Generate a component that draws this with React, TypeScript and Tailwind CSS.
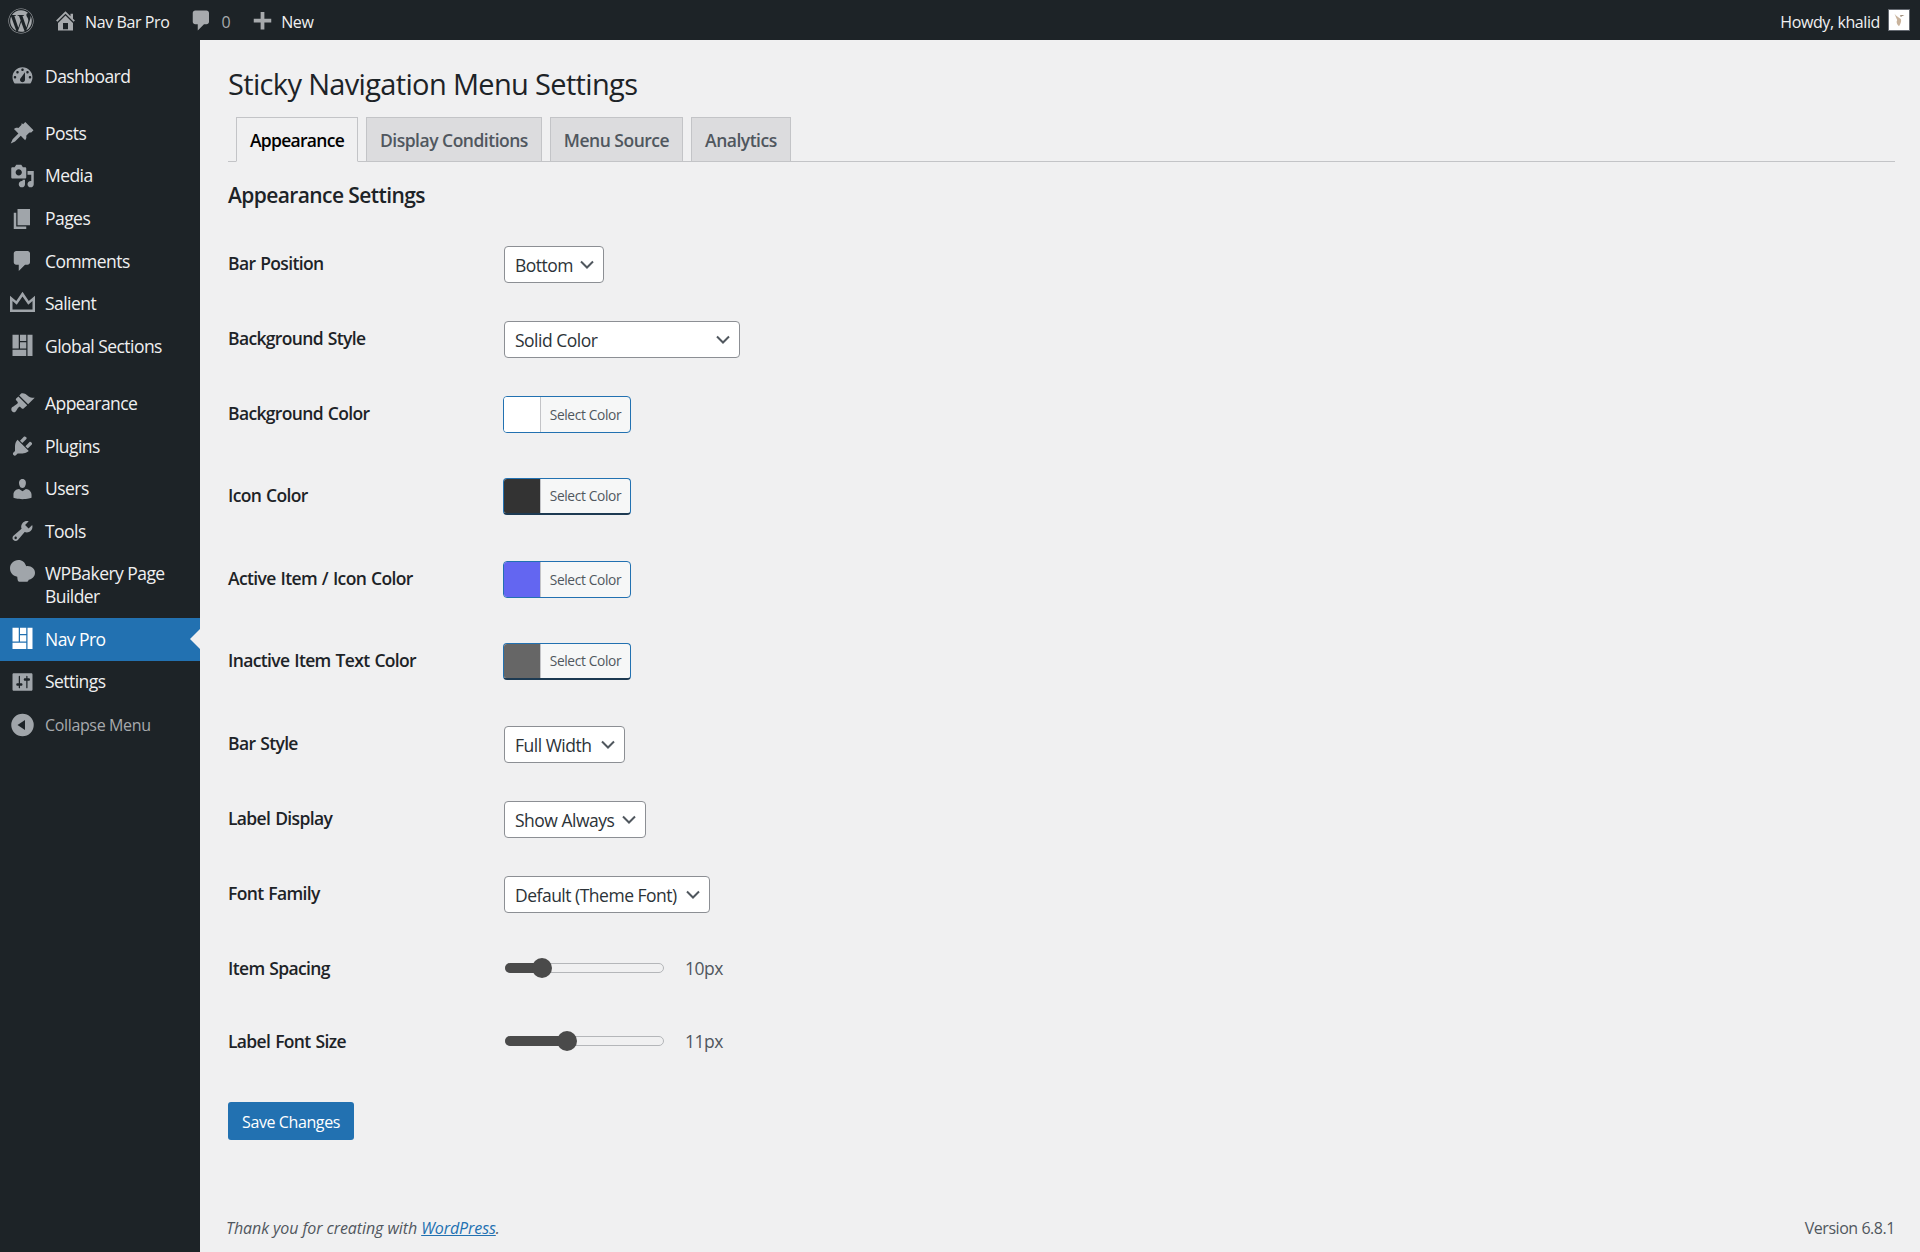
import { FaWordpress } from "react-icons/fa";

const font = "font-['Open_Sans','Noto_Sans',sans-serif]";

const Dash = ({ d, className }: { d: string; className?: string }) => {
  return (
    <svg viewBox="0 0 20 20" fill="currentColor" fillRule="evenodd" className={className}>
      <path d={d} />
    </svg>
  );
};

const paths = {
  home: "M16 8.5l1.53 1.53-1.06 1.06L10 4.62l-6.47 6.47-1.06-1.06L10 2.5l4 4v-2h2v4zm-6-2.46l6 5.99V18H4v-5.97zM12 17v-5H8v5h4z",
  comment: "M5 2h9c1.1 0 2 .9 2 2v7c0 1.1-.9 2-2 2h-2l-5 5v-5H5c-1.1 0-2-.9-2-2V4c0-1.1.9-2 2-2z",
  plus: "M17 7v3h-5.5v5.5h-3V10H3V7h5.5V1.5h3V7z",
  dashboard:
    "M3.76 16h12.48c1.1-1.37 1.76-3.11 1.76-5 0-4.42-3.58-8-8-8s-8 3.58-8 8c0 1.89.66 3.63 1.76 5zM10 4c.55 0 1 .45 1 1s-.45 1-1 1-1-.45-1-1 .45-1 1-1zM6 6c.55 0 1 .45 1 1s-.45 1-1 1-1-.45-1-1 .45-1 1-1zm8 0c.55 0 1 .45 1 1s-.45 1-1 1-1-.45-1-1 .45-1 1-1zm-5.37 5.55L12 7v6c0 1.1-.9 2-2 2s-2-.9-2-2c0-.57.24-1.08.63-1.45zM4 10c.55 0 1 .45 1 1s-.45 1-1 1-1-.45-1-1 .45-1 1-1zm12 0c.55 0 1 .45 1 1s-.45 1-1 1-1-.45-1-1 .45-1 1-1z",
  post: "M10.44 3.02l1.82-1.82 6.54 6.54-1.82 1.82c-.58-.07-1.15.03-1.7.3l-2.3 2.3c.17.62.2 1.26.05 1.9-.14.62-.45 1.18-.9 1.66l-3.52-3.52-4.6 4.6-3.4 1.5 1.5-3.4 4.6-4.6-3.52-3.52c.48-.45 1.04-.76 1.66-.9.64-.15 1.28-.12 1.9.05l2.3-2.3c.27-.55.37-1.12.3-1.7z",
  media:
    "M13 11V4c0-.55-.45-1-1-1h-1.67L9 1H5L3.67 3H2c-.55 0-1 .45-1 1v7c0 .55.45 1 1 1h10c.55 0 1-.45 1-1zM7 4.5c1.38 0 2.5 1.12 2.5 2.5S8.38 9.5 7 9.5 4.5 8.38 4.5 7 5.62 4.5 7 4.5zM14 6h5v10.5c0 1.38-1.12 2.5-2.5 2.5S14 17.88 14 16.5s1.12-2.5 2.5-2.5c.17 0 .34.02.5.05V9h-3V6zm-4 8.05V13h2v3.5c0 1.38-1.12 2.5-2.5 2.5S7 17.88 7 16.5 8.12 14 9.5 14c.17 0 .34.02.5.05z",
  page: "M6 15V2h10v13H6zm-1 1h8v2H3V5h2v11z",
  layout: "M2 1h5v11H2zM8 1h5v5H8zM8 7h5v5H8zM14 1h4v17h-4zM2 13h11v5H2z",
  appearance:
    "M14.48 11.06L7.41 3.99l1.5-1.5c.5-.56 2.3-.47 3.51.32 1.21.8 1.43 1.28 2.91 2.1 1.18.64 2.45 1.26 4.45.85zm-.71.71L6.7 4.7 4.93 6.47c-.39.39-.39 1.02 0 1.41l1.06 1.06c.39.39.39 1.03 0 1.42-.6.6-1.43 1.11-2.21 1.69-.35.26-.7.53-1.01.84C1.43 13.23.91 14.53 1.1 15.6c.11.58.46 1.13 1.23 1.54.87.46 1.5.27 2.03-.16.47-.38.79-1.03 1.15-1.59.36-.56.75-1.21 1.21-1.76l.31-.33c.37-.39 1.01-.39 1.39 0l1.06 1.06c.39.39 1.02.39 1.41 0z",
  plugins:
    "M13.11 4.36L9.87 7.6 8 5.73l3.24-3.24c.35-.34 1.05-.2 1.56.32.52.51.66 1.21.31 1.55zm-8 1.77l.91-1.12 9.01 9.01-1.19.84c-.71.71-2.63 1.16-3.82 1.16H6.14L4.9 17.26c-.59.59-1.54.59-2.12 0-.59-.58-.59-1.53 0-2.12l1.24-1.24v-3.88c0-1.13.4-3.19 1.09-3.89zm7.26 3.97l3.24-3.24c.34-.35 1.04-.21 1.55.31.52.51.66 1.21.31 1.55l-3.24 3.25z",
  users:
    "M10 9.25c-2.27 0-2.73-3.44-2.73-3.44C7 4.02 7.82 2 9.97 2c2.16 0 2.98 2.02 2.71 3.81 0 0-.41 3.44-2.68 3.44zm0 2.57L12.72 10c2.39 0 4.52 2.33 4.52 4.53v2.49s-3.65 1.13-7.24 1.13c-3.65 0-7.24-1.13-7.24-1.13v-2.49c0-2.25 1.94-4.48 4.47-4.48z",
  tools:
    "M16.68 9.77c-1.34 1.34-3.3 1.67-4.95.99l-5.41 6.52c-.99.99-2.59.99-3.58 0s-.99-2.59 0-3.57l6.52-5.42c-.68-1.65-.35-3.61.99-4.95 1.28-1.28 3.12-1.62 4.72-1.06l-2.89 2.89 2.82 2.82 2.86-2.87c.53 1.58.18 3.39-1.08 4.65zM3.81 16.21c.4.39 1.04.39 1.43 0 .4-.4.4-1.04 0-1.43-.39-.4-1.03-.4-1.43 0-.39.39-.39 1.03 0 1.43z",
  settings:
    "M18 16V4c0-.55-.45-1-1-1H3c-.55 0-1 .45-1 1v12c0 .55.45 1 1 1h14c.55 0 1-.45 1-1zM8 11h1c.55 0 1 .45 1 1s-.45 1-1 1H8v1.5c0 .28-.22.5-.5.5s-.5-.22-.5-.5V13H6c-.55 0-1-.45-1-1s.45-1 1-1h1V5.5c0-.28.22-.5.5-.5s.5.22.5.5V11zm5-2h-1c-.55 0-1-.45-1-1s.45-1 1-1h1V5.5c0-.28.22-.5.5-.5s.5.22.5.5V7h1c.55 0 1 .45 1 1s-.45 1-1 1h-1v5.5c0 .28-.22.5-.5.5s-.5-.22-.5-.5V9z",
  collapse: "M10 1a9 9 0 1 0 0 18 9 9 0 0 0 0-18zm2 5v8l-6-4z",
  crown: "M0 16.4V3.4L5 7.6 10 .2l5 7.4 5-4.200v13zM2 14.400h16V7.600L14.600 10.500 10 3.900 5.400 10.500 2 7.600z",
  cloud:
    "M6.700 1.500C10 1.500 12 3.500 13 6.500 17 6 20 8.500 20 11.800 20 15 17.500 17 15 17.300 14.500 18.500 14 19 13 19H7.500C6.500 19 6 18 5.800 14.900 2.500 14.500 0 12 0 8.200 0 4.500 3 1.500 6.700 1.500z",
};

const menu: { label: string[]; icon: string; gap?: boolean; active?: boolean }[] = [
  { label: ["Dashboard"], icon: paths.dashboard, gap: true },
  { label: ["Posts"], icon: paths.post },
  { label: ["Media"], icon: paths.media },
  { label: ["Pages"], icon: paths.page },
  { label: ["Comments"], icon: paths.comment },
  { label: ["Salient"], icon: paths.crown },
  { label: ["Global Sections"], icon: paths.layout, gap: true },
  { label: ["Appearance"], icon: paths.appearance },
  { label: ["Plugins"], icon: paths.plugins },
  { label: ["Users"], icon: paths.users },
  { label: ["Tools"], icon: paths.tools },
  { label: ["WPBakery Page", "Builder"], icon: paths.cloud },
  { label: ["Nav Pro"], icon: paths.layout, active: true },
  { label: ["Settings"], icon: paths.settings },
];

const Chevron = () => {
  return (
    <svg viewBox="0 0 20 20" fill="none" className="absolute right-[6px] top-1/2 h-[20px] w-[20px] -translate-y-1/2 text-[#50575e]">
      <path d="M4 6.500l6 6 6-6" stroke="currentColor" strokeWidth="2" />
    </svg>
  );
};

const Select = ({ value, width }: { value: string; width: string }) => {
  return (
    <div className={`relative flex h-[37px] items-center rounded-[4px] border border-[#8c8f94] bg-white pl-[10px] pt-[1px] text-[17.5px] tracking-[-0.5px] text-[#2c3338] ${width}`}>
      {value}
      <Chevron />
    </div>
  );
};

const ColorButton = ({ swatch, dark }: { swatch: string; dark?: boolean }) => {
  return (
    <div className={`-ml-px flex h-[37px] w-[128px] items-stretch overflow-hidden rounded-[4px] border border-[#2271b1] bg-[#f6f7f7] ${dark ? "border-b-2 border-b-[#1d3a52]" : ""}`}>
      <span className={`w-[37px] border-r border-[#c3c4c7] ${swatch}`} />
      <span className="flex flex-1 items-center justify-center pt-[1px] text-[13.75px] tracking-[-0.35px] text-[#50575e]">Select Color</span>
    </div>
  );
};

const Slider = ({ fill, value }: { fill: string; value: string }) => {
  return (
    <div className="ml-px flex items-center">
      <div className="relative h-[10px] w-[159px] rounded-full border border-[#b4b6b9] bg-[#f0f0f1]">
        <div className={`absolute -left-px -top-px h-[10px] rounded-full bg-[#4a4a4a] ${fill === "a" ? "w-[40px]" : "w-[65px]"}`} />
        <div className={`absolute top-1/2 h-[20px] w-[20px] -translate-y-1/2 rounded-full bg-[#4a4a4a] ${fill === "a" ? "left-[26px]" : "left-[51px]"}`} />
      </div>
      <span className="ml-[21px] text-[17.5px] tracking-[-0.5px] text-[#50575e]">{value}</span>
    </div>
  );
};

const Row = ({ label, gap, flat, children }: { label: string; gap: string; flat?: boolean; children: React.ReactNode }) => {
  return (
    <div className={`flex h-[37px] items-center ${gap}`}>
      <div className={`w-[276px] text-[17.5px] font-semibold tracking-[-0.65px] text-[#1d2327] [word-spacing:1px] ${flat ? "" : "-mt-[3px]"}`}>{label}</div>
      {children}
    </div>
  );
};

const tabs = ["Display Conditions", "Menu Source", "Analytics"];

export default function App() {
  return (
    <div className={`flex min-h-[1252px] flex-col bg-[#f0f0f1] ${font}`}>
      <header className="flex h-10 items-center justify-between bg-[#1d2327] text-[#f0f0f1]">
        <div className="flex items-center text-[16px] tracking-[-0.4px]">
          <FaWordpress className="ml-[8px] mt-[1px] h-[26px] w-[26px] text-[#a7aaad]" />
          <Dash d={paths.home} className="ml-[19px] h-[25px] w-[25px] text-[#a7aaad]" />
          <span className="ml-[7px] pt-[3px]">Nav Bar Pro</span>
          <Dash d={paths.comment} className="ml-[20px] h-[25px] w-[25px] text-[#a7aaad]" />
          <span className="ml-[7px] pt-[3px] text-[#a7aaad]">0</span>
          <Dash d={paths.plus} className="ml-[20px] mt-[4px] h-[25px] w-[25px] text-[#a7aaad]" />
          <span className="ml-[6px] pt-[3px]">New</span>
        </div>
        <div className="flex items-center text-[16px] tracking-[-0.4px]">
          <span className="pt-[3px]">Howdy, khalid</span>
          <div className="ml-[8px] mr-[10px] flex h-[22px] w-[22px] items-center justify-center border border-[#646970] bg-white">
            <svg viewBox="0 0 20 20" className="h-[18px] w-[18px]">
              <path d="M5 3c2 3 5 4 7 6 1 2 0 5-2 8-3-3-3-5-2-7C7 8 6 5 5 3z" fill="#c9b39c" />
              <path d="M11 5l5-.500-4 2z" fill="#7a6248" />
            </svg>
          </div>
        </div>
      </header>

      <div className="flex flex-1">
        <aside className="flex w-[200px] shrink-0 flex-col bg-[#1d2327] pt-[15px] text-[#f0f0f1]">
          {menu.map((item) => (
            <div
              key={item.label[0]}
              className={`relative flex pl-[45px] pr-2 text-[17.5px] leading-[23px] tracking-[-0.55px] ${item.label.length > 1 ? "h-[65.500px] pt-[9.500px]" : "h-[42.600px] items-center"} ${item.gap ? "mb-[14.500px]" : ""} ${item.active ? "bg-[#2271b1] text-white" : ""}`}
            >
              <Dash
                d={item.icon}
                className={`absolute left-[10px] h-[25px] w-[25px] ${item.label.length > 1 ? "top-[5px]" : "top-1/2 -translate-y-1/2"} ${item.active ? "text-white" : "text-[#a0a5aa]"}`}
              />
              <span>
                {item.label.map((line) => (
                  <span key={line} className="block">
                    {line}
                  </span>
                ))}
              </span>
              {item.active && (
                <span className="absolute right-0 top-1/2 -translate-y-1/2 border-y-[10px] border-r-[10px] border-y-transparent border-r-[#f0f0f1]" />
              )}
            </div>
          ))}
          <div className="relative mt-[1px] flex h-[42.500px] items-center pl-[45px] text-[16px] tracking-[-0.35px] text-[#a7aaad]">
            <Dash d={paths.collapse} className="absolute left-[10px] top-1/2 h-[25px] w-[25px] -translate-y-1/2 text-[#a0a5aa]" />
            Collapse Menu
          </div>
        </aside>

        <main className="flex min-w-0 flex-1 flex-col pl-[28px] pr-[25px]">
          <h1 className="mt-[24px] text-[29px] leading-[40px] tracking-[-0.66px] text-[#1d2327]">Sticky Navigation Menu Settings</h1>

          <div className="mt-[13px] flex h-[45px] items-end gap-[8px] border-b border-[#c3c4c7] pl-[8px]">
            <div className="relative top-px flex h-[45px] w-[122px] items-center justify-center border border-[#c3c4c7] border-b-[#f0f0f1] bg-[#f0f0f1] pt-[2px] text-[17.5px] font-semibold tracking-[-0.7px] text-black">
              Appearance
            </div>
            {tabs.map((tab) => (
              <div key={tab} className="flex h-[44px] items-center border border-b-0 border-[#c3c4c7] bg-[#dcdcde] px-[13px] pt-[2px] text-[17.5px] font-semibold tracking-[-0.5px] text-[#50575e]">
                {tab}
              </div>
            ))}
          </div>

          <h2 className="mt-[17px] text-[21px] font-semibold leading-[32px] tracking-[-0.6px] text-[#1d2327]">Appearance Settings</h2>

          <div className="mt-[35px] flex flex-col">
            <Row label="Bar Position" gap="mb-[38px]">
              <Select value="Bottom" width="w-[100px]" />
            </Row>
            <Row label="Background Style" gap="mb-[38px]">
              <Select value="Solid Color" width="w-[236px]" />
            </Row>
            <Row label="Background Color" gap="mb-[45px]">
              <ColorButton swatch="bg-white" />
            </Row>
            <Row label="Icon Color" gap="mb-[46px]">
              <ColorButton swatch="bg-[#333333]" dark />
            </Row>
            <Row label="Active Item / Icon Color" gap="mb-[45px]">
              <ColorButton swatch="bg-[#6366f1]" />
            </Row>
            <Row label="Inactive Item Text Color" gap="mb-[46px]">
              <ColorButton swatch="bg-[#666666]" dark />
            </Row>
            <Row label="Bar Style" gap="mb-[38px]">
              <Select value="Full Width" width="w-[121px]" />
            </Row>
            <Row label="Label Display" gap="mb-[38px]">
              <Select value="Show Always" width="w-[142px]" />
            </Row>
            <Row label="Font Family" gap="mb-[36.500px]">
              <Select value="Default (Theme Font)" width="w-[206px]" />
            </Row>
            <Row label="Item Spacing" gap="mb-[36px]" flat>
              <Slider fill="a" value="10px" />
            </Row>
            <Row label="Label Font Size" gap="" flat>
              <Slider fill="b" value="11px" />
            </Row>
          </div>

          <button className="mt-[42.500px] h-[38px] w-[126px] rounded-[3px] bg-[#2271b1] pt-[1px] text-[16px] tracking-[-0.4px] text-white">Save Changes</button>

          <footer className="mt-auto flex h-[50px] items-start justify-between pt-[14px] text-[16px] text-[#50575e]">
            <span className="-ml-[2px] italic tracking-[-0.08px]">
              Thank you for creating with <span className="text-[#2271b1] underline">WordPress</span>.
            </span>
            <span className="tracking-[-0.45px]">Version 6.8.1</span>
          </footer>
        </main>
      </div>
    </div>
  );
}
